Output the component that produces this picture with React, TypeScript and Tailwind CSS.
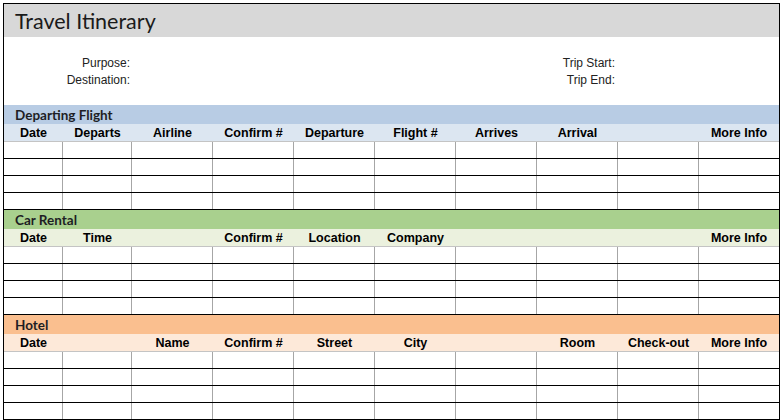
import React from "react";

type Section = {
  title: string;
  band: string;
  head: string;
  cols: string[];
};

const sections: Section[] = [
  {
    title: "Departing Flight",
    band: "bg-[#b8cce4]",
    head: "bg-[#dce6f1]",
    cols: ["Date", "Departs", "Airline", "Confirm #", "Departure", "Flight #", "Arrives", "Arrival", "", "More Info"],
  },
  {
    title: "Car Rental",
    band: "bg-[#a9d08e]",
    head: "bg-[#ebf1de]",
    cols: ["Date", "Time", "", "Confirm #", "Location", "Company", "", "", "", "More Info"],
  },
  {
    title: "Hotel",
    band: "bg-[#fabf8f]",
    head: "bg-[#fde9d9]",
    cols: ["Date", "", "Name", "Confirm #", "Street", "City", "", "Room", "Check-out", "More Info"],
  },
];

const gridCols = "grid grid-cols-[59px_69px_repeat(7,81px)_80px]";

function SectionBlock({ s }: { s: Section }) {
  return (
    <div>
      <div
        className={`${s.band} h-[19px] pl-[11px] text-[13.5px] font-bold leading-[20px] text-[#1e1e24]`}
        style={{ fontFamily: "Lato, 'Liberation Sans', sans-serif" }}
      >
        {s.title}
      </div>
      <div className={`${s.head} ${gridCols} h-[18px] border-b border-[#c4c4c4]`}>
        {s.cols.map((c, i) => (
          <div
            key={i}
            className="pt-[2px] text-center text-[12.5px] font-bold leading-[15px] text-black whitespace-nowrap"
            style={{ fontFamily: "'Liberation Sans', Arial, sans-serif" }}
          >
            {c}
          </div>
        ))}
      </div>
      {[0, 1, 2, 3].map((r) => (
        <div key={r} className={`${gridCols} h-[17px] border-b border-black`}>
          {s.cols.map((_, i) => (
            <div key={i} className={i < 9 ? "border-r border-[#a6a6a6]" : ""} />
          ))}
        </div>
      ))}
    </div>
  );
}

export default function App() {
  return (
    <div className="w-[782px] h-[420px] overflow-hidden bg-white">
      <div className="ml-[3px] mt-[3px] w-[777px] border-l border-t border-r border-black">
        <div
          className="h-[33px] bg-[#d8d8d8] pl-[11px] text-[21.5px] leading-[34px] text-[#1a1a1a]"
          style={{ fontFamily: "Lato, 'Liberation Sans', sans-serif" }}
        >
          Travel Itinerary
        </div>
        <div
          className="flex h-[68px] pt-[18px] text-[12px] leading-[17px] text-[#222]"
          style={{ fontFamily: "'Liberation Sans', Arial, sans-serif" }}
        >
          <div className="w-[126px] text-right">
            <div>Purpose:</div>
            <div>Destination:</div>
          </div>
          <div className="ml-[405px] w-[80px] text-right">
            <div>Trip Start:</div>
            <div>Trip End:</div>
          </div>
        </div>
        {sections.map((s) => (
          <SectionBlock key={s.title} s={s} />
        ))}
      </div>
    </div>
  );
}
